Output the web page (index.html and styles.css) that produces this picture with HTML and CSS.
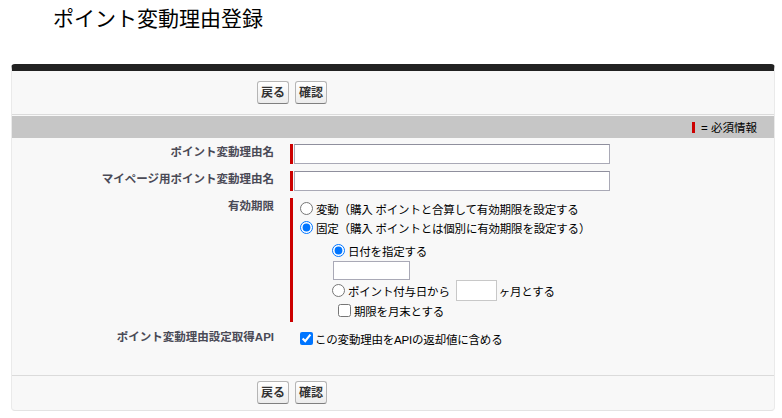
FILE: index.html
```html
<!DOCTYPE html>
<html lang="ja">
<head>
<meta charset="utf-8">
<title>ポイント変動理由登録</title>
<link rel="stylesheet" href="styles.css">
</head>
<body>
<h1 class="page-title">ポイント変動理由登録</h1>
<div class="panel">
  <div class="btn-row btn-row-top">
    <button class="btn" type="button">戻る</button>
    <button class="btn" type="button">確認</button>
  </div>
  <div class="section-head">
    <span class="legend"><span class="req-mark"></span><span class="legend-text">= 必須情報</span></span>
  </div>
  <div class="form">
    <div class="row">
      <div class="label">ポイント変動理由名</div>
      <div class="data required"><input class="text-input" type="text"></div>
    </div>
    <div class="row">
      <div class="label">マイページ用ポイント変動理由名</div>
      <div class="data required"><input class="text-input" type="text"></div>
    </div>
    <div class="row">
      <div class="label">有効期限</div>
      <div class="data required period">
        <label class="opt"><input type="radio" name="kind" class="radio">変動（購入 ポイントと合算して有効期限を設定する</label>
        <label class="opt"><input type="radio" name="kind" class="radio" checked>固定（購入 ポイントとは個別に有効期限を設定する）</label>
        <div class="sub">
          <label class="opt opt-sub"><input type="radio" name="fixed" class="radio" checked>日付を指定する</label>
          <input class="date-input" type="text">
          <div class="opt opt-month">
            <input type="radio" name="fixed" class="radio"><span class="month-lead">ポイント付与日から</span><input class="month-input" type="text"><span>ヶ月とする</span>
          </div>
          <label class="opt opt-check"><input type="checkbox" class="check">期限を月末とする</label>
        </div>
      </div>
    </div>
    <div class="row row-api">
      <div class="label">ポイント変動理由設定取得API</div>
      <div class="data">
        <label class="opt opt-api"><input type="checkbox" class="check" checked>この変動理由をAPIの返却値に含める</label>
      </div>
    </div>
  </div>
  <div class="btn-row btn-row-bottom">
    <button class="btn" type="button">戻る</button>
    <button class="btn" type="button">確認</button>
  </div>
</div>
</body>
</html>
```
FILE: styles.css
```css
* { box-sizing: border-box; }
html, body { margin: 0; padding: 0; background: #fff; }
body {
  font-family: Arial, "Liberation Sans", "Noto Sans CJK JP", sans-serif;
  color: #000;
  font-size: 12px;
}
.page-title {
  margin: 0;
  padding: 6px 0 0 53px;
  height: 64px;
  font-size: 21px;
  font-weight: normal;
  line-height: 26px;
  font-family: Arial, "Noto Sans CJK JP", sans-serif;
}
.panel {
  margin-left: 11px;
  width: 764px;
  background: #f8f8f8;
  border-top: 7px solid #222;
  border-left: 1px solid #eaeaea;
  border-right: 1px solid #eaeaea;
  border-bottom: 1px solid #e3e3e3;
  border-radius: 4px;
}
.btn-row {
  display: flex;
  gap: 6px;
  padding-left: 245px;
  align-items: center;
}
.btn-row-top {
  height: 44px;
  border-bottom: 1px solid #dbdbdb;
}
.btn-row-bottom {
  height: 35px;
  border-top: 1px solid #dbdbdb;
  padding-bottom: 1px;
}
.btn {
  font-family: Arial, "Noto Sans CJK JP", sans-serif;
  font-size: 12px;
  font-weight: bold;
  color: #333;
  height: 23px;
  padding: 0 3px;
  border: 1px solid #b5b5b5;
  border-bottom-color: #7f7f7f;
  border-radius: 3px;
  background: linear-gradient(#ffffff, #ececec);
  line-height: 20px;
}
.section-head {
  margin-top: 1px;
  height: 22px;
  background: #c6c6c6;
  display: flex;
  justify-content: flex-end;
  align-items: center;
  padding-right: 17px;
}
.legend { display: flex; align-items: center; }
.req-mark {
  display: inline-block;
  width: 3px;
  height: 11px;
  background: #c00;
  margin-right: 6px;
}
.legend-text { font-size: 11.5px; color: #000; }
.form {
  padding: 6px 0 20px;
}
.row {
  display: grid;
  grid-template-columns: 278px 1fr;
  margin-bottom: 7px;
}
.label {
  text-align: right;
  padding-right: 16px;
  font-weight: bold;
  color: #4a4a56;
  font-size: 11.5px;
  line-height: 16px;
}
.data {
  display: flex;
  flex-direction: column;
  align-items: flex-start;
  padding-left: 4px;
}
.data.required {
  border-left: 3px solid #c00;
  padding-left: 1px;
}
.text-input {
  width: 316px;
  height: 20px;
  border: 1px solid #a9a9b6;
  border-top-color: #8f8f9d;
  background: #fff;
  margin: 0;
}
.period { padding-top: 1px; height: 124px; }
.opt {
  display: flex;
  align-items: center;
  height: 19px;
  font-size: 11.5px;
  letter-spacing: -0.2px;
  color: #000;
  white-space: nowrap;
}
.radio, .check {
  width: 13px;
  height: 13px;
  margin: 0 3px 0 6px;
  flex: none;
}
.sub {
  padding-left: 32px;
  padding-top: 4px;
  display: flex;
  flex-direction: column;
  align-items: flex-start;
}
.date-input {
  width: 77px;
  height: 19px;
  border: 1px solid #a9a9b6;
  background: #fff;
  margin: 1px 0 0 7px;
}
.opt-month { height: 21px; }
.month-lead { margin-right: 6px; }
.month-input {
  width: 41px;
  height: 21px;
  border: 1px solid #c8c8c8;
  background: #fff;
  margin: 0 2px 0 0;
}
.opt-check .check { margin-left: 12px; }
.opt-api .check { margin-left: 6px; margin-right: 2px; }
```
